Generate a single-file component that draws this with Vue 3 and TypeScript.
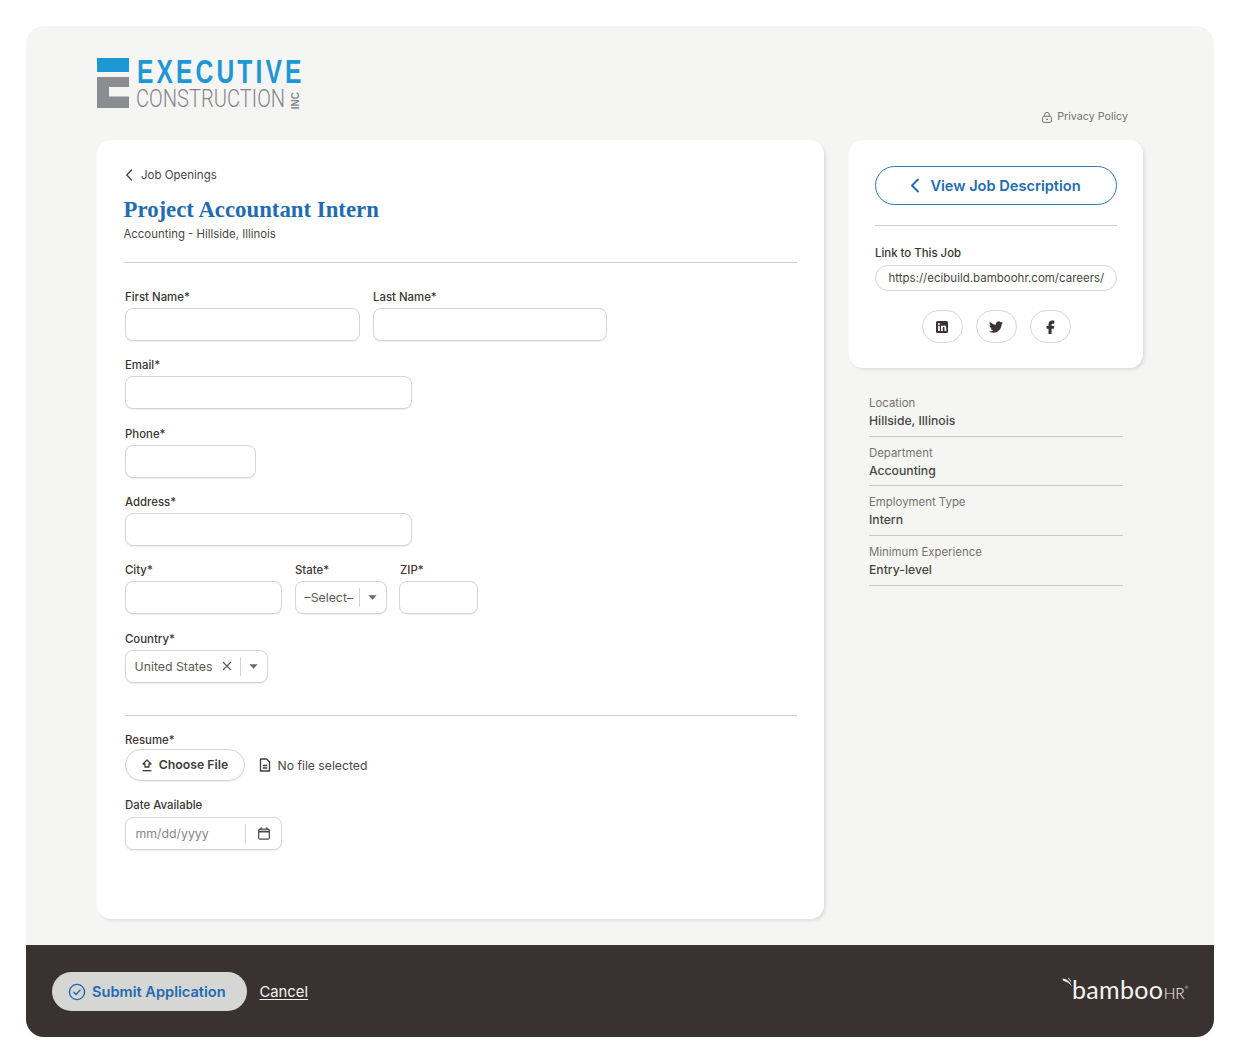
<script setup lang="ts">
const details = [
  { label: 'Location', value: 'Hillside, Illinois' },
  { label: 'Department', value: 'Accounting' },
  { label: 'Employment Type', value: 'Intern' },
  { label: 'Minimum Experience', value: 'Entry-level' },
]
</script>

<template>
  <div class="page">
    <div class="shell">
      <div class="top">
        <header class="header">
          <div class="logo">
            <svg class="mark" width="32" height="50" viewBox="0 0 32 50">
              <rect x="0" y="0" width="32" height="14" fill="#1f97d4" />
              <path d="M0 19H32V29H12V38.500H32V50H0Z" fill="#8c8d90" />
            </svg>
            <div class="logo-words">
              <div class="logo-exec"><span>EXECUTIVE</span></div>
              <div class="logo-row">
                <span class="logo-cons"><span>CONSTRUCTION</span></span>
                <span class="logo-inc">INC</span>
              </div>
            </div>
          </div>
          <a class="privacy">
            <svg width="10" height="11" viewBox="0 0 10 11" fill="none" stroke="#77736f" stroke-width="1">
              <rect x="0.6" y="4.2" width="8.800" height="6.200" rx="1.300" />
              <path d="M2.600 4.200V2.800a2.400 2.400 0 0 1 4.800 0v1.400" />
              <path d="M4 7.300h2" />
            </svg>
            Privacy Policy
          </a>
        </header>

        <div class="columns">
          <main class="card form-card">
            <a class="back">
              <svg width="9" height="12" viewBox="0 0 9 12" fill="none" stroke="#4a4643" stroke-width="1.4" stroke-linecap="round" stroke-linejoin="round">
                <path d="M6.500 1L1.800 6l4.700 5" />
              </svg>
              Job Openings
            </a>
            <h1 class="title">Project Accountant Intern</h1>
            <p class="subtitle">Accounting - Hillside, Illinois</p>
            <hr class="rule rule-head" />

            <form class="form">
              <div class="row">
                <label class="field"><span class="lbl">First Name*</span><input class="input w-first" /></label>
                <label class="field"><span class="lbl">Last Name*</span><input class="input w-last" /></label>
              </div>
              <div class="row">
                <label class="field"><span class="lbl">Email*</span><input class="input w-long" /></label>
              </div>
              <div class="row">
                <label class="field"><span class="lbl">Phone*</span><input class="input w-phone" /></label>
              </div>
              <div class="row">
                <label class="field"><span class="lbl">Address*</span><input class="input w-long" /></label>
              </div>
              <div class="row">
                <label class="field"><span class="lbl">City*</span><input class="input w-city" /></label>
                <div class="field">
                  <span class="lbl">State*</span>
                  <div class="select w-state">
                    <span class="sel-text">–Select–</span>
                    <span class="sep"></span>
                    <svg class="caret" width="9" height="5" viewBox="0 0 9 5"><path d="M0.300 0.300H8.700L4.500 4.800Z" fill="#6f6b68" /></svg>
                  </div>
                </div>
                <label class="field"><span class="lbl">ZIP*</span><input class="input w-zip" /></label>
              </div>
              <div class="row">
                <div class="field">
                  <span class="lbl">Country*</span>
                  <div class="select w-country">
                    <span class="sel-text">United States</span>
                    <svg class="clear" width="10" height="10" viewBox="0 0 10 10" fill="none" stroke="#5c5855" stroke-width="1.100"><path d="M1 1l8 8M9 1l-8 8" /></svg>
                    <span class="sep"></span>
                    <svg class="caret" width="9" height="5" viewBox="0 0 9 5"><path d="M0.300 0.300H8.700L4.500 4.800Z" fill="#6f6b68" /></svg>
                  </div>
                </div>
              </div>
              <hr class="rule rule-mid" />
              <div class="field">
                <span class="lbl lbl-tight">Resume*</span>
                <div class="file-row">
                  <button type="button" class="choose">
                    <svg width="12" height="13" viewBox="0 0 12 13" fill="none" stroke="#3f3b38" stroke-width="1.300" stroke-linejoin="round">
                      <path d="M6 1L10 5H8v3H4V5H2Z" />
                      <path d="M1.500 11.700h9" />
                    </svg>
                    Choose File
                  </button>
                  <span class="no-file">
                    <svg width="12" height="14" viewBox="0 0 12 14" fill="none" stroke="#3f3b38" stroke-width="1.300" stroke-linejoin="round">
                      <path d="M1.500 1h6l3 3v9h-9Z" />
                      <path d="M3.800 7.500h4.400M3.800 10h4.400" />
                    </svg>
                    No file selected
                  </span>
                </div>
              </div>
              <div class="field date-field">
                <span class="lbl lbl-date">Date Available</span>
                <div class="select w-date">
                  <span class="placeholder">mm/dd/yyyy</span>
                  <span class="sep sep-date"></span>
                  <svg width="12" height="13" viewBox="0 0 12 13" fill="none" stroke="#4a4643" stroke-width="1.200">
                    <rect x="0.700" y="2.200" width="10.600" height="10" rx="1.200" />
                    <path d="M0.700 4.600h10.600" stroke-width="1.800" />
                    <path d="M3.200 0.300v2.400M8.800 0.300v2.400" />
                  </svg>
                </div>
              </div>
            </form>
          </main>

          <aside class="side">
            <section class="card side-card">
              <button type="button" class="view-btn">
                <svg width="10" height="15" viewBox="0 0 10 15" fill="none" stroke="#1f6cb0" stroke-width="1.900" stroke-linecap="round" stroke-linejoin="round">
                  <path d="M8 1.500L2 7.500l6 6" />
                </svg>
                View Job Description
              </button>
              <hr class="rule rule-side" />
              <div class="link-lbl">Link to This Job</div>
              <input class="link-input" value="https://ecibuild.bamboohr.com/careers/" readonly />
              <div class="socials">
                <span class="social">
                  <svg width="12" height="12" viewBox="0 0 24 24"><path fill="#3a3533" fill-rule="evenodd" d="M3 0h18a3 3 0 0 1 3 3v18a3 3 0 0 1-3 3H3a3 3 0 0 1-3-3V3a3 3 0 0 1 3-3ZM4 9.500V20h3.500V9.500ZM5.750 4a2 2 0 1 0 0 4 2 2 0 0 0 0-4ZM10 9.500V20h3.500v-5.500c0-1.600.7-2.400 1.900-2.400s1.600.9 1.600 2.300V20h3.500v-6.500c0-2.900-1.500-4.300-3.700-4.300-1.500 0-2.600.7-3.300 1.700V9.500Z" /></svg>
                </span>
                <span class="social">
                  <svg width="14" height="14" viewBox="0 0 24 24"><path fill="#3a3533" d="M23.953 4.570a10 10 0 01-2.825.775 4.958 4.958 0 002.163-2.723c-.951.555-2.005.959-3.127 1.184a4.920 4.920 0 00-8.384 4.482C7.690 8.095 4.067 6.130 1.640 3.162a4.822 4.822 0 00-.666 2.475c0 1.710.870 3.213 2.188 4.096a4.904 4.904 0 01-2.228-.616v.060a4.923 4.923 0 003.946 4.827 4.996 4.996 0 01-2.212.085 4.936 4.936 0 004.604 3.417 9.867 9.867 0 01-6.102 2.105c-.390 0-.779-.023-1.170-.067a13.995 13.995 0 007.557 2.209c9.053 0 13.998-7.496 13.998-13.985 0-.210 0-.420-.015-.630A9.935 9.935 0 0024 4.590z" /></svg>
                </span>
                <span class="social">
                  <svg width="15" height="15" viewBox="0 0 24 24"><path fill="#3a3533" d="M14.500 7.500H18V2.500h-3.500C11.200 2.500 8.800 5.200 8.800 8.500v2.700H5.600v4.500h3.200V24h4.900v-8.300h3.700l.7-4.500h-4.400V9c0-.9.600-1.500 1.300-1.500z" /></svg>
                </span>
              </div>
            </section>
            <dl class="details">
              <div v-for="d in details" :key="d.label" class="detail">
                <dt>{{ d.label }}</dt>
                <dd>{{ d.value }}</dd>
              </div>
            </dl>
          </aside>
        </div>
      </div>

      <footer class="footer">
        <div class="actions">
          <button type="button" class="submit">
            <svg width="18" height="18" viewBox="0 0 18 18" fill="none" stroke="#1f6cb0" stroke-width="1.400" stroke-linecap="round" stroke-linejoin="round">
              <circle cx="9" cy="9" r="7.600" />
              <path d="M5.800 9.200l2.300 2.300 4.100-4.600" />
            </svg>
            Submit Application
          </button>
          <a class="cancel">Cancel</a>
        </div>
        <div class="bamboo">
          <svg class="leaf" width="12" height="9" viewBox="0 0 12 9">
            <path d="M0.300 0.600C3.800 0.800 7.500 2.800 10.200 8.500C7.700 5.400 5 3.700 1.300 2.700Z" fill="#f4f2ef" />
            <path d="M5.800 0.300L8.800 3.800L9.400 3.300L6.600 0Z" fill="#f4f2ef" />
          </svg>
          <span class="b-word">bamboo</span><span class="b-hr">HR</span><span class="b-tm">®</span>
        </div>
      </footer>
    </div>
  </div>
</template>

<style scoped>
* { box-sizing: border-box; }
.page { padding: 26px; font-family: Inter, "Liberation Sans", sans-serif; color: #3a3533; }
.shell { width: 1188px; height: 1011px; border-radius: 18px; overflow: hidden; display: flex; flex-direction: column; background: #f5f5f3; }
.top { flex: 1; padding: 32px 71px 0; }
.header { height: 82px; display: flex; justify-content: space-between; position: relative; }
.logo { display: flex; gap: 7.500px; height: 50px; }
.logo-words { display: flex; flex-direction: column; width: 170px; }
.logo-exec { height: 28px; font-family: "Liberation Sans", sans-serif; font-weight: 700; font-size: 33px; line-height: 28px; color: #1f97d4; white-space: nowrap; }
.logo-exec span { display: inline-block; transform: scaleX(0.745); transform-origin: left center; letter-spacing: 4.200px; }
.logo-row { display: flex; gap: 6px; align-items: flex-end; margin-left: -1px; }
.logo-cons { display: block; width: 149px; height: 23px; font-family: Roboto, "Liberation Sans", sans-serif; font-weight: 300; font-size: 26.500px; line-height: 23px; color: #85868a; white-space: nowrap; }
.logo-cons span { display: inline-block; transform: scaleX(0.76); transform-origin: left center; }
.logo-inc { writing-mode: vertical-rl; transform: rotate(180deg); font-family: "Liberation Sans", sans-serif; font-weight: 700; font-size: 10px; line-height: 10px; color: #85868a; }
.privacy { align-self: flex-end; margin: 0 15px 16px 0; display: flex; align-items: center; gap: 5px; font-size: 10.700px; line-height: 14px; color: #77736f; }
.columns { display: flex; gap: 25px; align-items: flex-start; }
.card { background: #fff; border-radius: 14px; box-shadow: 2px 2px 3px rgba(0, 0, 0, 0.09); }
.form-card { width: 727px; height: 779px; padding: 27px 27px 0; }
.back { display: flex; align-items: center; gap: 7px; height: 16px; font-size: 11.500px; line-height: 16px; color: #4a4643; padding-left: 1px; }
.title { margin: 12px 0 0 -0.500px; font-family: "Liberation Serif", serif; font-weight: 700; font-size: 22.800px; line-height: 30px; color: #1f6cb0; white-space: nowrap; }
.subtitle { margin: 1px 0 0 -0.500px; font-size: 11.400px; line-height: 16px; color: #4a4643; }
.rule { border: 0; height: 1px; background: #cfcecb; margin: 0; }
.rule-head { margin-top: 20px; }
.form { margin-top: 26px; padding-left: 1px; display: flex; flex-direction: column; gap: 16.350px; }
.row { display: flex; gap: 13px; }
.field { display: flex; flex-direction: column; }
.lbl { font-size: 11.400px; font-weight: 500; line-height: 16px; height: 19px; color: #3a3533; white-space: nowrap; }
.lbl-tight { height: 17px; }
.lbl-date { height: 20px; }
.input, .select { height: 33px; border: 1.500px solid #d6d5d2; border-radius: 8px; background: #fff; box-shadow: 0 1px 1px rgba(0, 0, 0, 0.07); outline: none; }
.select { display: flex; align-items: center; padding-left: 8.500px; font-size: 12.300px; color: #5c5855; white-space: nowrap; }
.w-first { width: 235px; }
.w-last { width: 234px; }
.w-long { width: 287px; }
.w-phone { width: 131px; }
.w-city { width: 157px; }
.w-state { width: 92px; }
.w-zip { width: 79px; margin-left: -1px; }
.w-country { width: 143px; }
.w-date { width: 157px; }
.sep { width: 1px; height: 19px; background: #d4d3d0; margin: 0 8px 0 6px; flex: none; }
.clear { margin-left: 10px; margin-right: 2px; }
.rule-mid { margin: 15.700px 0 0; width: 672px; }
.file-row { display: flex; align-items: center; gap: 14px; }
.choose { width: 120px; height: 32px; border: 1.500px solid #d6d5d2; border-radius: 16px; background: #fff; display: flex; align-items: center; justify-content: center; gap: 6px; font: 600 12.300px/16px Inter, sans-serif; color: #3f3b38; box-shadow: 0 1px 1px rgba(0, 0, 0, 0.06); padding: 0 1px 0 0; }
.no-file { display: flex; align-items: center; gap: 6.500px; font-size: 12.200px; color: #4a4643; }
.date-field { margin-top: 0; }
.placeholder { color: #8b8784; width: 110px; padding-left: 1px; }
.sep-date { margin: 0 12px 0 0; }
.side { width: 294px; }
.side-card { height: 228px; padding: 26px; display: flex; flex-direction: column; }
.view-btn { width: 242px; height: 39px; flex: none; border: 1.500px solid #2f77b6; border-radius: 20px; background: #fff; display: flex; align-items: center; justify-content: center; gap: 10px; font: 600 14.600px/18px Inter, sans-serif; color: #1f6cb0; padding: 0 1px 0 0; }
.rule-side { margin-top: 20px; width: 242px; flex: none; }
.link-lbl { margin-top: 19px; font-size: 11.400px; line-height: 16px; font-weight: 500; color: #3a3533; }
.link-input { margin-top: 4px; width: 242px; height: 26px; flex: none; border: 1.500px solid #d6d5d2; border-radius: 13px; padding: 0 8px 0 12.500px; font: 11.500px/16px Inter, sans-serif; color: #4a4643; outline: none; background: #fff; }
.socials { margin-top: 19px; display: flex; justify-content: center; gap: 13px; }
.social { width: 41px; height: 33px; border: 1.500px solid #d6d5d2; border-radius: 17px; display: flex; align-items: center; justify-content: center; flex: none; }
.details { margin: 24px 20px 0; padding: 0; }
.detail { height: 44.700px; margin-bottom: 5px; border-bottom: 1px solid #c9c8c5; padding-top: 2px; }
.detail dt { font-size: 11.400px; line-height: 18px; color: #77736f; }
.detail dd { margin: 0; font-size: 12.200px; line-height: 18px; font-weight: 450; color: #4a4643; }
.footer { height: 92px; flex: none; background: #3a3230; display: flex; align-items: center; justify-content: space-between; padding: 0 26px; }
.actions { display: flex; align-items: center; gap: 13px; }
.submit { width: 195px; height: 39px; border: 0; border-radius: 20px; background: #d6d6d5; display: flex; align-items: center; justify-content: flex-start; gap: 6px; font: 600 14.600px/18px Inter, sans-serif; color: #1f6cb0; padding: 1px 0 0 16px; }
.cancel { font-size: 14.800px; line-height: 18px; color: #f4f2ef; text-decoration: underline; text-underline-offset: 2px; margin-top: 1px; margin-left: -0.500px; }
.bamboo { position: relative; display: flex; align-items: baseline; width: 126px; color: #f4f2ef; font-family: Lato, sans-serif; font-weight: 400; padding-left: 10px; }
.leaf { position: absolute; left: 0; top: 4px; }
.b-word { font-size: 25px; line-height: 30px; letter-spacing: 0.300px; }
.b-hr { font-size: 15.500px; line-height: 30px; margin-left: 0.500px; font-weight: 300; }
.b-tm { font-size: 4px; align-self: flex-start; margin-top: 11px; }
</style>
